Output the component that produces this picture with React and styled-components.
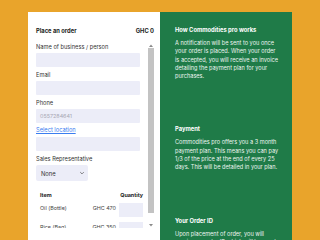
import React from "react";
import styled, { createGlobalStyle } from "styled-components";

const GlobalStyle = createGlobalStyle`
  html, body {
    margin: 0;
    padding: 0;
    background: #e9a42b;
    font-family: Inter, "Noto Sans", sans-serif;
    overflow: hidden;
  }
`;

const Page = styled.div`
  width: 320px;
  height: 240px;
  display: flex;
  justify-content: center;
  padding-top: 12px;
  box-sizing: border-box;
  overflow: hidden;
`;

const OrderPanel = styled.div`
  width: 132px;
  height: 240px;
  background: #ffffff;
  padding: 0 6px 0 8px;
  box-sizing: border-box;
  display: flex;
  flex-direction: column;
`;

const Header = styled.div`
  display: flex;
  justify-content: space-between;
  align-items: center;
  height: 14px;
  margin: 11px 0 5px;
  font-size: 5.8px;
  font-weight: 700;
  color: #1b1b1b;
`;

const Scroller = styled.div`
  height: 186px;
  flex: none;
  display: flex;
`;

const Viewport = styled.div`
  flex: 1;
  overflow: hidden;
  padding-top: 1px;
`;

const ScrollBar = styled.div`
  width: 6px;
  display: flex;
  flex-direction: column;
  align-items: center;
`;

const Arrow = styled.div`
  height: 6px;
  width: 6px;
  display: flex;
  align-items: center;
  justify-content: center;
`;

const Thumb = styled.div`
  width: 6px;
  height: 165px;
  background: #c3c3c3;
`;

const Track = styled.div`
  flex: 1;
`;

const Form = styled.div`
  width: 104px;
  display: flex;
  flex-direction: column;
`;

const Field = styled.div`
  display: flex;
  flex-direction: column;
  gap: 2px;
  margin-bottom: ${(p) => p.$mb ?? 4}px;
`;

const Label = styled.label`
  font-size: 5.7px;
  line-height: 8px;
  color: #333;
`;

const Input = styled.div`
  height: 14px;
  background: #ecedf8;
  border-radius: 1px;
  font-size: 5.4px;
  color: #a8a8b4;
  display: flex;
  align-items: center;
  padding-left: 4px;
`;

const LinkText = styled.a`
  font-size: 5.7px;
  line-height: 8px;
  color: #3b7df0;
  text-decoration: underline;
  margin: 0 0 3px;
`;

const Select = styled.div`
  width: 52px;
  height: 16px;
  background: #ecedf8;
  border-radius: 2px;
  display: flex;
  align-items: center;
  justify-content: space-between;
  padding: 0 3px 0 5px;
  box-sizing: border-box;
  font-size: 5.8px;
  color: #333;
`;

const Table = styled.div`
  width: 107px;
  margin-top: 10px;
  display: grid;
  grid-template-columns: 1fr auto 24px;
  column-gap: 3px;
  row-gap: 5px;
  align-items: start;
  padding-left: 4px;
  box-sizing: border-box;
  font-size: 5.4px;
  color: #444;
`;

const HeadCell = styled.div`
  font-weight: 700;
  color: #222;
  line-height: 8px;
  margin-bottom: -1px;
  text-align: ${(p) => (p.$right ? "right" : "left")};
  grid-column: ${(p) => p.$span || "auto"};
`;

const Cell = styled.div`
  line-height: 8px;
  padding-top: 1px;
  text-align: ${(p) => (p.$right ? "right" : "left")};
  white-space: nowrap;
`;

const QtyBox = styled.div`
  height: 14px;
  background: #ecedf8;
`;

const InfoPanel = styled.div`
  width: 132px;
  height: 240px;
  background: #1f7b48;
  color: #ffffff;
  padding: 14px 12px 0 15px;
  box-sizing: border-box;
`;

const Section = styled.div`
  margin-bottom: 45px;
`;

const Title = styled.div`
  font-size: 5.8px;
  font-weight: 700;
  line-height: 8px;
  margin-bottom: 5px;
`;

const Body = styled.p`
  margin: 0;
  font-size: 5.6px;
  line-height: 8.3px;
  color: #eef5f0;
`;

const items = [
  ["Oil (Bottle)", "GHC 470"],
  ["Rice (Bag)", "GHC 350"],
];

const Tri = ({ up }) => (
  <svg width="4" height="3" viewBox="0 0 4 3">
    <path d={up ? "M0 3L2 0.5L4 3Z" : "M0 0L2 2.5L4 0Z"} fill="#8a8a8a" />
  </svg>
);

export default function App() {
  return (
    <>
      <GlobalStyle />
      <Page>
        <OrderPanel>
          <Header>
            <span>Place an order</span>
            <span>GHC 0</span>
          </Header>
          <Scroller>
            <Viewport>
              <Form>
                <Field>
                  <Label>Name of business / person</Label>
                  <Input />
                </Field>
                <Field>
                  <Label>Email</Label>
                  <Input />
                </Field>
                <Field $mb={3}>
                  <Label>Phone</Label>
                  <Input>0557284641</Input>
                </Field>
                <LinkText>Select location</LinkText>
                <Field>
                  <Input />
                </Field>
                <Field $mb={0}>
                  <Label>Sales Representative</Label>
                  <Select>
                    <span>None</span>
                    <svg width="6" height="6" viewBox="0 0 10 10">
                      <path d="M2 3.5l3 3 3-3" fill="none" stroke="#555" strokeWidth="1.2" />
                    </svg>
                  </Select>
                </Field>
                <Table>
                  <HeadCell $span="1 / 3">Item</HeadCell>
                  <HeadCell $right>Quantity</HeadCell>
                  {items.map(([name, price]) => (
                    <React.Fragment key={name}>
                      <Cell>{name}</Cell>
                      <Cell $right>{price}</Cell>
                      <QtyBox />
                    </React.Fragment>
                  ))}
                </Table>
              </Form>
            </Viewport>
            <ScrollBar>
              <Arrow>
                <Tri up />
              </Arrow>
              <Thumb />
              <Track />
              <Arrow>
                <Tri />
              </Arrow>
            </ScrollBar>
          </Scroller>
        </OrderPanel>
        <InfoPanel>
          <Section>
            <Title>How Commodities pro works</Title>
            <Body>
              A notification will be sent to you once your order is placed. When your order
              is accepted, you will receive an invoice detailing the payment plan for your
              purchases.
            </Body>
          </Section>
          <Section>
            <Title>Payment</Title>
            <Body>
              Commodities pro offers you a 3 month payment plan. This means you can pay 1/3
              of the price at the end of every 25 days. This will be detailed in your plan.
            </Body>
          </Section>
          <Section>
            <Title>Your Order ID</Title>
            <Body>
              Upon placement of order, you will receive an order ID which will be used to
              track your order.
            </Body>
          </Section>
        </InfoPanel>
      </Page>
    </>
  );
}
